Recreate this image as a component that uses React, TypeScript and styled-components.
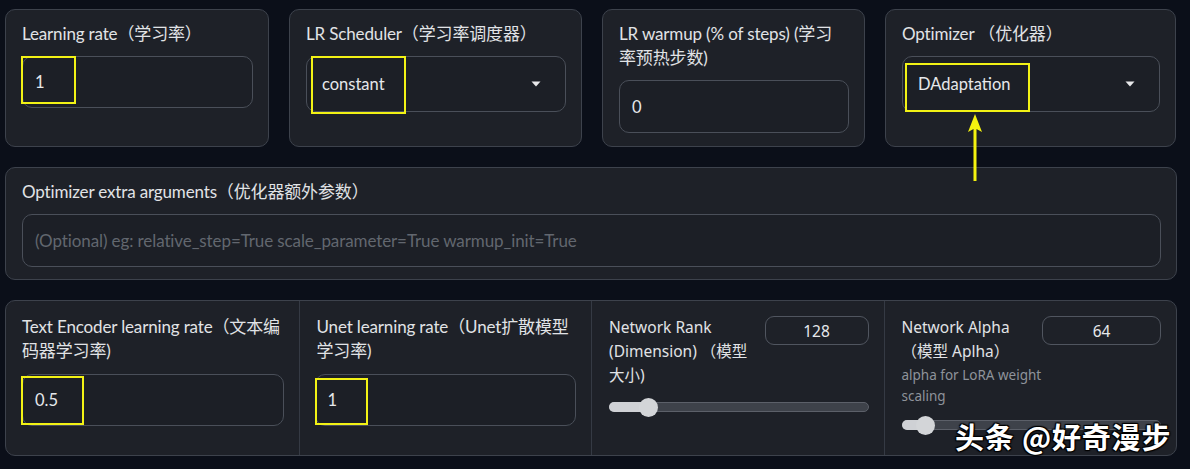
import React from "react";
import styled, { createGlobalStyle } from "styled-components";

const GlobalStyle = createGlobalStyle`
  html, body {
    margin: 0;
    padding: 0;
    background: #0b0f19;
  }
  body {
    font-family: Lato, "Noto Sans CJK SC", sans-serif;
    color: #e3e5e8;
  }
  * { box-sizing: border-box; }
`;

const Page = styled.div`
  position: relative;
  width: 1190px;
  height: 469px;
  padding: 9px 13px 0 5px;
  display: flex;
  flex-direction: column;
  gap: 20px;
  overflow: hidden;
`;

const TopRow = styled.div`
  display: grid;
  grid-template-columns: 264px 293px 263px 291px;
  column-gap: 20px;
  height: 138px;
`;

const Card = styled.div`
  background: #1e2128;
  border: 1px solid #3d424c;
  border-radius: 10px;
  padding: 12px 15px 12px 16px;
  display: flex;
  flex-direction: column;
`;

const Label = styled.div`
  font-size: 17px;
  line-height: 24px;
  color: #e1e3e6;
  white-space: nowrap;
  margin-bottom: 10px;
  letter-spacing: -0.15px;
`;

const Field = styled.div<{ $h: number }>`
  position: relative;
  height: ${(p) => p.$h}px;
  border: 1px solid #4a4f59;
  border-radius: 10px;
  background: #1c1f26;
  display: flex;
  align-items: center;
  justify-content: space-between;
  padding: 0 24px 0 12px;
  font-size: 16.5px;
  color: #e6e8eb;
`;

const Placeholder = styled.span`
  color: #62676f;
  font-size: 17px;
  letter-spacing: -0.1px;
`;

const Highlight = styled.div<{ $l: number; $t: number; $w: number; $h: number }>`
  position: absolute;
  left: ${(p) => p.$l}px;
  top: ${(p) => p.$t}px;
  width: ${(p) => p.$w}px;
  height: ${(p) => p.$h}px;
  border: 2px solid #f2f215;
  pointer-events: none;
`;

const Caret = () => (
  <svg width="10" height="6" viewBox="0 0 10 6">
    <path d="M0.5 0.5 L9.5 0.5 L5 5.5 Z" fill="#e8e8ea" />
  </svg>
);

const WideCard = styled(Card)`
  height: 113px;
`;

const BottomCard = styled.div`
  background: #1e2128;
  border: 1px solid #3d424c;
  border-radius: 10px;
  height: 156px;
  display: grid;
  grid-template-columns: repeat(4, 1fr);
  overflow: hidden;
`;

const Column = styled.div<{ $first?: boolean }>`
  padding: 14px 15px 0 ${(p) => (p.$first ? 16 : 17)}px;
  border-left: ${(p) => (p.$first ? "none" : "1px solid #353a44")};
  display: flex;
  flex-direction: column;
`;

const SliderHead = styled.div`
  display: flex;
  justify-content: space-between;
  align-items: flex-start;
`;

const SliderLabel = styled.div`
  font-family: "Noto Sans", "Noto Sans CJK SC", sans-serif;
  font-size: 15.5px;
  line-height: 24px;
  color: #e1e3e6;
  white-space: nowrap;
`;

const Info = styled.div`
  font-family: "Noto Sans", sans-serif;
  font-size: 13.5px;
  line-height: 21px;
  color: #8e939b;
  margin-top: 2px;
  white-space: nowrap;
`;

const NumberBox = styled.div<{ $w: number }>`
  width: ${(p) => p.$w}px;
  height: 29px;
  margin-top: 1px;
  border: 1px solid #50555f;
  border-radius: 9px;
  display: flex;
  align-items: center;
  justify-content: center;
  font-family: "Noto Sans", sans-serif;
  font-size: 15.5px;
  color: #e6e8eb;
`;

const Track = styled.div<{ $mt: number }>`
  position: relative;
  margin-top: ${(p) => p.$mt}px;
  height: 10px;
  border-radius: 5px;
  background: #3e424a;
  border: 1px solid #5c6069;
`;

const Fill = styled.div`
  position: absolute;
  left: -1px;
  top: -1px;
  bottom: -1px;
  border-radius: 5px;
  background: #cfd1d5;
`;

const Thumb = styled.div`
  position: absolute;
  top: 50%;
  width: 19px;
  height: 19px;
  margin-left: -9px;
  margin-top: -9.5px;
  border-radius: 50%;
  background: #d3d5d8;
`;

const Slider = ({ pct, mt }: { pct: number; mt: number }) => (
  <Track $mt={mt}>
    <Fill style={{ width: `${pct}%` }} />
    <Thumb style={{ left: `${pct}%` }} />
  </Track>
);

const Arrow = styled.svg`
  position: absolute;
  left: 966px;
  top: 113px;
`;

const Watermark = styled.div`
  position: absolute;
  left: 955px;
  top: 418px;
  font-family: "Noto Sans CJK SC", sans-serif;
  font-size: 29px;
  font-weight: 700;
  line-height: 36px;
  color: #ffffff;
  letter-spacing: 0.8px;
  text-shadow: 0 0 2px #000, 1px 1px 1px #000, -1px -1px 1px #000, 1px -1px 1px #000, -1px 1px 1px #000;
  white-space: nowrap;
`;

const Value = styled.span<{ $ml?: number }>`
  margin-left: ${(p) => p.$ml ?? 0}px;
`;

export default function App() {
  return (
    <>
      <GlobalStyle />
      <Page>
        <TopRow>
          <Card>
            <Label>Learning rate（学习率）</Label>
            <Field $h={52}>
              <Value>1</Value>
              <Highlight $l={-2} $t={-1} $w={55} $h={48} />
            </Field>
          </Card>
          <Card>
            <Label>LR Scheduler（学习率调度器）</Label>
            <Field $h={56}>
              <Value $ml={3}>constant</Value>
              <Caret />
              <Highlight $l={4} $t={-1} $w={95} $h={58} />
            </Field>
          </Card>
          <Card>
            <Label>
              LR warmup (% of steps) (学习
              <br />
              率预热步数)
            </Label>
            <Field $h={53}>
              <Value>0</Value>
            </Field>
          </Card>
          <Card>
            <Label>Optimizer （优化器）</Label>
            <Field $h={56}>
              <Value $ml={3}>DAdaptation</Value>
              <Caret />
              <Highlight $l={2} $t={6} $w={125} $h={49} />
            </Field>
          </Card>
        </TopRow>

        <WideCard>
          <Label>Optimizer extra arguments（优化器额外参数）</Label>
          <Field $h={53}>
            <Placeholder>
              (Optional) eg: relative_step=True scale_parameter=True warmup_init=True
            </Placeholder>
          </Field>
        </WideCard>

        <BottomCard>
          <Column $first>
            <Label style={{ marginBottom: 11 }}>
              Text Encoder learning rate（文本编
              <br />
              码器学习率)
            </Label>
            <Field $h={52}>
              <Value>0.5</Value>
              <Highlight $l={-2} $t={1} $w={63} $h={49} />
            </Field>
          </Column>
          <Column>
            <Label style={{ marginBottom: 11 }}>
              Unet learning rate（Unet扩散模型
              <br />
              学习率)
            </Label>
            <Field $h={52} style={{ marginLeft: -2 }}>
              <Value>1</Value>
              <Highlight $l={-1} $t={3} $w={53} $h={47} />
            </Field>
          </Column>
          <Column>
            <SliderHead>
              <SliderLabel>
                Network Rank
                <br />
                (Dimension) （模型
                <br />
                大小)
              </SliderLabel>
              <NumberBox $w={104}>128</NumberBox>
            </SliderHead>
            <Slider pct={14.6} mt={15} />
          </Column>
          <Column>
            <SliderHead>
              <SliderLabel>
                Network Alpha
                <br />
                （模型 Aplha）
              </SliderLabel>
              <NumberBox $w={119}>64</NumberBox>
            </SliderHead>
            <Info>
              alpha for LoRA weight
              <br />
              scaling
            </Info>
            <Slider pct={8.8} mt={13} />
          </Column>
        </BottomCard>

        <Arrow width="18" height="70" viewBox="0 0 18 70">
          <path d="M9 1 L16 19 L10.5 16 L10.5 68 L7.5 68 L7.5 16 L2 19 Z" fill="#f4f20f" />
        </Arrow>
        <Watermark>头条 @好奇漫步</Watermark>
      </Page>
    </>
  );
}
